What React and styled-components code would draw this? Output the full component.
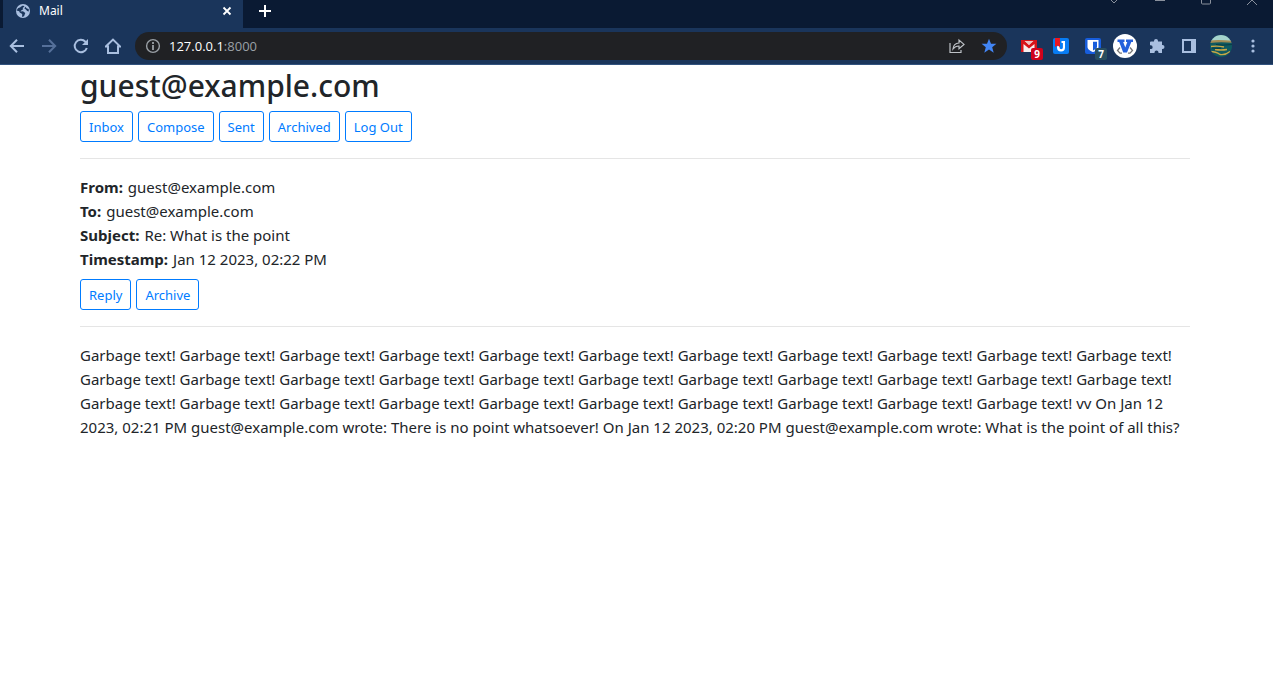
import React from 'react';
import styled, { createGlobalStyle } from 'styled-components';

const Global = createGlobalStyle`
  *, *::before, *::after { box-sizing: border-box; }
  body {
    margin: 0;
    background: #fff;
    color: #212529;
    font: 400 15px/24px "Noto Sans", "Open Sans", sans-serif;
  }
  button { font-family: inherit; cursor: pointer; }
  svg { display: block; flex: none; }
`;

const TabStrip = styled.div`
  display: flex;
  height: 28px;
  background: #0a1a33;
  padding-left: 3px;
`;

const Tab = styled.div`
  display: flex;
  align-items: flex-start;
  width: 240px;
  padding: 3px 8px 0 12px;
  background: #1a355b;
`;

const TabTitle = styled.span`
  flex: 1;
  margin-left: 8px;
  color: #fff;
  font-size: 12px;
  line-height: 16px;
`;

const ChromeButton = styled.button`
  display: flex;
  align-items: center;
  justify-content: center;
  flex: none;
  width: ${(p) => p.$width || 16}px;
  height: ${(p) => p.$height || 16}px;
  padding: 0;
  border: 0;
  background: none;
  color: ${(p) => p.$color || '#a9bfe0'};
`;

const NewTab = styled(ChromeButton)`
  margin: 3px 0 0 14px;
`;

const WindowControls = styled.div`
  display: flex;
  align-items: flex-start;
  gap: 30px;
  margin-left: auto;
  padding-right: 13px;
`;

const Toolbar = styled.div`
  display: flex;
  align-items: center;
  height: 37px;
  padding-right: 4px;
  background: #1a355b;
  border-bottom: 1px solid #31527e;
`;

const NavButtons = styled.div`
  display: flex;
  padding: 0 6px 0 1px;
`;

const AddressBar = styled.div`
  display: flex;
  align-items: center;
  flex: 1;
  min-width: 0;
  height: 28px;
  padding: 0 10px;
  border-radius: 14px;
  background: #202124;
`;

const Address = styled.div`
  flex: 1;
  margin-left: 8px;
  color: #9aa0a6;
  font-family: "Open Sans", "Noto Sans", sans-serif;
  font-size: 13px;
  line-height: 18px;
  b { color: #fff; font-weight: 400; }
`;

const AddressActions = styled.div`
  display: flex;
  gap: 16px;
`;

const Extensions = styled.div`
  display: flex;
  margin-left: 6px;
`;

const ExtensionButton = styled(ChromeButton)`
  position: relative;
`;

const Badge = styled.span`
  position: absolute;
  right: 2px;
  bottom: 0;
  width: 12px;
  height: 12px;
  border-radius: 2px;
  background: ${(p) => p.$color};
  color: #fff;
  font-size: 10px;
  font-weight: 700;
  line-height: 12px;
  text-align: center;
`;

const Page = styled.main`
  padding: 0 83px 0 80px;
`;

const Account = styled.h2`
  margin: 0 0 6px;
  padding-top: 2px;
  font-size: 30px;
  font-weight: 500;
  line-height: 38px;
`;

const ButtonRow = styled.div`
  display: flex;
  gap: 5px;
`;

const OutlineButton = styled.button`
  height: 31px;
  padding: 1px 8px 0;
  border: 1px solid #007bff;
  border-radius: 3px;
  background: transparent;
  color: #007bff;
  font-size: 13px;
  line-height: 21px;
`;

const Divider = styled.hr`
  height: 1px;
  margin: 16px 0;
  border: 0;
  background: #e5e5e5;
`;

const Details = styled.dl`
  margin: 0 0 8px;
`;

const Detail = styled.div`
  display: flex;
  gap: 5px;
  dt { font-weight: 700; }
  dd { margin: 0; }
`;

const Message = styled.p`
  margin: 0;
`;

const stroke = (width = 2) => ({ fill: 'none', stroke: 'currentColor', strokeWidth: width });

const Globe = () => (
  <svg width="16" height="16" viewBox="0 0 16 16">
    <circle cx="8" cy="8" r="7" fill="#a9bfe0" />
    <path d="M3 5.2C4.6 4 5.4 5 5.8 3.7L8 2.4l1.5 1L7.6 5l.6 1.3-2 1.2-.6 1.1 2.4-.3 2.3 1.7-.6 1.4-.6 1.9-2 .6.1-2.8-2.5-1.5-.5-1.3-2.6-.7z" fill="#1a355b" />
    <path d="M10.3 3.7l1.6 1.8 1.8.6.1 2.3-1.7-.5-1.2-1.5-1.5-.9z" fill="#1a355b" />
  </svg>
);

const Arrow = ({ flip }) => (
  <svg width="16" height="16" viewBox="0 0 16 16">
    <path d={flip ? 'M1 8h13M8 1.7 14.2 8 8 14.3' : 'M15 8H2M8 1.7 1.8 8 8 14.3'} {...stroke()} />
  </svg>
);

const Reload = () => (
  <svg width="16" height="16" viewBox="0 0 16 16">
    <path d="M13.8 10A6.2 6.2 0 1 1 12.4 3.7L14 5.5" {...stroke()} />
    <path d="M15 1v6H9z" fill="currentColor" />
  </svg>
);

const Home = () => (
  <svg width="16" height="16" viewBox="0 0 16 16">
    <path d="M.8 8.5 8 1.6l7.2 6.9H13V15H3V8.5z" {...stroke()} />
  </svg>
);

const Info = () => (
  <svg width="16" height="16" viewBox="0 0 16 16">
    <circle cx="8" cy="8" r="6.4" {...stroke(1.4)} />
    <path d="M8 7v5M8 4v2" {...stroke(1.8)} />
  </svg>
);

const Share = () => (
  <svg width="16" height="16" viewBox="0 0 16 16">
    <path d="M1 5v9.500h11V12" {...stroke(1.2)} />
    <path d="M4 11c.4-4 2.5-5.9 6-6V2l5 4.4-5 4.3V8c-2.8-.1-4.5 1-6 3z" {...stroke(1.2)} />
  </svg>
);

const Star = () => (
  <svg width="16" height="16" viewBox="0 0 16 16">
    <path d="m8 .8 2 5h5.4l-4.2 3.4 1.5 5.6L8 11.6l-4.7 3.2 1.5-5.6L.6 5.8H6z" fill="#4285f4" />
  </svg>
);

const Gmail = () => (
  <svg width="16" height="16" viewBox="0 0 16 16">
    <path d="M0 2h16v12H0z" fill="#f7eeee" />
    <path d="M0 2h3l5 5 5-5h3v12h-2.500V6L8 10.500 2.500 6v8H0z" fill="#d7141a" />
    <path d="M3.500 3h9L8 6.700z" fill="#eec3c3" />
    <path d="M1 2h14v1H1z" fill="#d7141a" />
  </svg>
);

const Bookmarks = () => (
  <svg width="16" height="16" viewBox="0 0 16 16">
    <rect width="16" height="16" rx="2" fill="#087cf4" />
    <path d="M8.500 3H12v6.500a4 4 0 0 1-8 0V8.500L6.500 7v2.500a1.700 1.700 0 0 0 3.400 0V5H8.500z" fill="#fff" />
    <path d="M2 0h5v9L4.500 7.500 2 9z" fill="#ee171f" />
  </svg>
);

const Shield = () => (
  <svg width="16" height="16" viewBox="0 0 16 16">
    <rect width="16" height="16" rx="2" fill="#175ddc" />
    <path d="M2.500 2h11v7c0 2.300-3.200 4.200-5.500 5-2.300-.8-5.500-2.700-5.500-5z" fill="#fff" />
    <path d="M8 3.700h4V9c0 1.600-2.300 2.800-4 3.400z" fill="#175ddc" />
  </svg>
);

const VimMark = () => (
  <svg width="24" height="24" viewBox="0 0 24 24">
    <circle cx="12" cy="12" r="12" fill="#fff" />
    <path d="M7 13.500 4.500 16.500l2.500 2.700h2M17 13.500l2.500 3-2.500 2.700h-2" fill="none" stroke="#777" strokeWidth="1.300" />
    <path d="M4.500 5.500h7V8h-1.300l2.100 5.500L14.300 8H13V5.500h7V8h-1.700L14 18.500h-3.800L6.200 8H4.500z" fill="#2460dc" />
  </svg>
);

const Puzzle = () => (
  <svg width="16" height="16" viewBox="0 0 16 16">
    <path d="M2 3.500h3V3a2 2 0 0 1 4 0v.5h4V7h.5a2 2 0 0 1 0 4H13v4H9.500v-.5a2 2 0 0 0-4 0v.5H1v-4h.8a1.800 1.800 0 0 0 0-3.700H1V4.500q0-1 1-1z" fill="currentColor" />
  </svg>
);

const SidePanel = () => (
  <svg width="16" height="16" viewBox="0 0 16 16">
    <path fillRule="evenodd" d="M1 1h14v14H1zm2 2v10h7V3z" fill="currentColor" />
  </svg>
);

const Avatar = () => (
  <svg width="22" height="22" viewBox="0 0 22 22">
    <clipPath id="avatarClip"><circle cx="11" cy="11" r="11" /></clipPath>
    <g clipPath="url(#avatarClip)">
      <path d="M0 0h22v22H0z" fill="#0f5960" />
      <path d="M0 0h22v6H0z" fill="#a5d3cc" />
      <path d="M0 5.500q8-1.200 22 .3v2Q10 6.800 0 8z" fill="#a28b55" />
      <path d="M1 11.500q7-1 13 .5M5 14.500q6 1 12 0M0 16.500q6 0 10 3 5 1 10-3" fill="none" stroke="#c8a645" strokeWidth="1.300" />
      <path d="M6 9.500q6 1.200 16 0M2 13q5 .8 9 .3" fill="none" stroke="#083d46" />
    </g>
  </svg>
);

const Dots = () => (
  <svg width="16" height="16" viewBox="0 0 16 16" fill="currentColor">
    <circle cx="8" cy="3" r="1.600" /><circle cx="8" cy="8" r="1.600" /><circle cx="8" cy="13" r="1.600" />
  </svg>
);

const Cross = () => (
  <svg width="16" height="16" viewBox="0 0 16 16"><path d="m4.500 4.500 7 7m0-7-7 7" {...stroke(1.8)} /></svg>
);

const Plus = () => (
  <svg width="16" height="16" viewBox="0 0 16 16"><path d="M8 2v12M2 8h12" {...stroke()} /></svg>
);

const controls = [
  ['Search tabs', 'M5 0l3 3 3-3'],
  ['Minimize', 'M3 .5h10'],
  ['Maximize', 'M3.5 0v3q0 1 1 1h7q1 0 1-1V0'],
  ['Close window', 'M3 5l5-5 5 5'],
];

const folders = ['Inbox', 'Compose', 'Sent', 'Archived', 'Log Out'];

const details = [
  ['From:', 'guest@example.com'],
  ['To:', 'guest@example.com'],
  ['Subject:', 'Re: What is the point'],
  ['Timestamp:', 'Jan 12 2023, 02:22 PM'],
];

const body =
  'Garbage text! '.repeat(32) +
  'vv On Jan 12 2023, 02:21 PM guest@example.com wrote: There is no point whatsoever! ' +
  'On Jan 12 2023, 02:20 PM guest@example.com wrote: What is the point of all this?';

export default function App() {
  return (
    <>
      <Global />
      <header>
        <TabStrip>
          <Tab>
            <Globe />
            <TabTitle>Mail</TabTitle>
            <ChromeButton aria-label="Close tab" $color="#fff"><Cross /></ChromeButton>
          </Tab>
          <NewTab aria-label="New tab" $color="#fff"><Plus /></NewTab>
          <WindowControls>
            {controls.map(([label, d]) => (
              <ChromeButton key={label} aria-label={label} $height={6} $color="#8a919d">
                <svg width="16" height="6" viewBox="0 0 16 6"><path d={d} {...stroke(1)} /></svg>
              </ChromeButton>
            ))}
          </WindowControls>
        </TabStrip>
        <Toolbar>
          <NavButtons>
            <ChromeButton $width={32} aria-label="Back"><Arrow /></ChromeButton>
            <ChromeButton $width={32} aria-label="Forward" $color="#55709a"><Arrow flip /></ChromeButton>
            <ChromeButton $width={32} aria-label="Reload"><Reload /></ChromeButton>
            <ChromeButton $width={32} aria-label="Home"><Home /></ChromeButton>
          </NavButtons>
          <AddressBar>
            <ChromeButton aria-label="Site information" $color="#9aa0a6"><Info /></ChromeButton>
            <Address><b>127.0.0.1</b>:8000</Address>
            <AddressActions>
              <ChromeButton aria-label="Share" $color="#bdc1c6"><Share /></ChromeButton>
              <ChromeButton aria-label="Bookmark"><Star /></ChromeButton>
            </AddressActions>
          </AddressBar>
          <Extensions>
            <ExtensionButton $width={32} $height={28} aria-label="Gmail"><Gmail /><Badge $color="#d0021b">9</Badge></ExtensionButton>
            <ExtensionButton $width={32} $height={28} aria-label="Bookmarks"><Bookmarks /></ExtensionButton>
            <ExtensionButton $width={32} $height={28} aria-label="Passwords"><Shield /><Badge $color="#294e5f">7</Badge></ExtensionButton>
            <ExtensionButton $width={32} $height={28} aria-label="Keyboard shortcuts"><VimMark /></ExtensionButton>
            <ExtensionButton $width={32} $height={28} aria-label="Extensions"><Puzzle /></ExtensionButton>
            <ExtensionButton $width={32} $height={28} aria-label="Side panel"><SidePanel /></ExtensionButton>
            <ExtensionButton $width={32} $height={28} aria-label="Profile"><Avatar /></ExtensionButton>
            <ExtensionButton $width={32} $height={28} aria-label="Menu"><Dots /></ExtensionButton>
          </Extensions>
        </Toolbar>
      </header>
      <Page>
        <Account>guest@example.com</Account>
        <ButtonRow>
          {folders.map((name) => <OutlineButton key={name}>{name}</OutlineButton>)}
        </ButtonRow>
        <Divider />
        <Details>
          {details.map(([label, value]) => (
            <Detail key={label}><dt>{label}</dt><dd>{value}</dd></Detail>
          ))}
        </Details>
        <ButtonRow>
          <OutlineButton>Reply</OutlineButton>
          <OutlineButton>Archive</OutlineButton>
        </ButtonRow>
        <Divider />
        <Message>{body}</Message>
      </Page>
    </>
  );
}
